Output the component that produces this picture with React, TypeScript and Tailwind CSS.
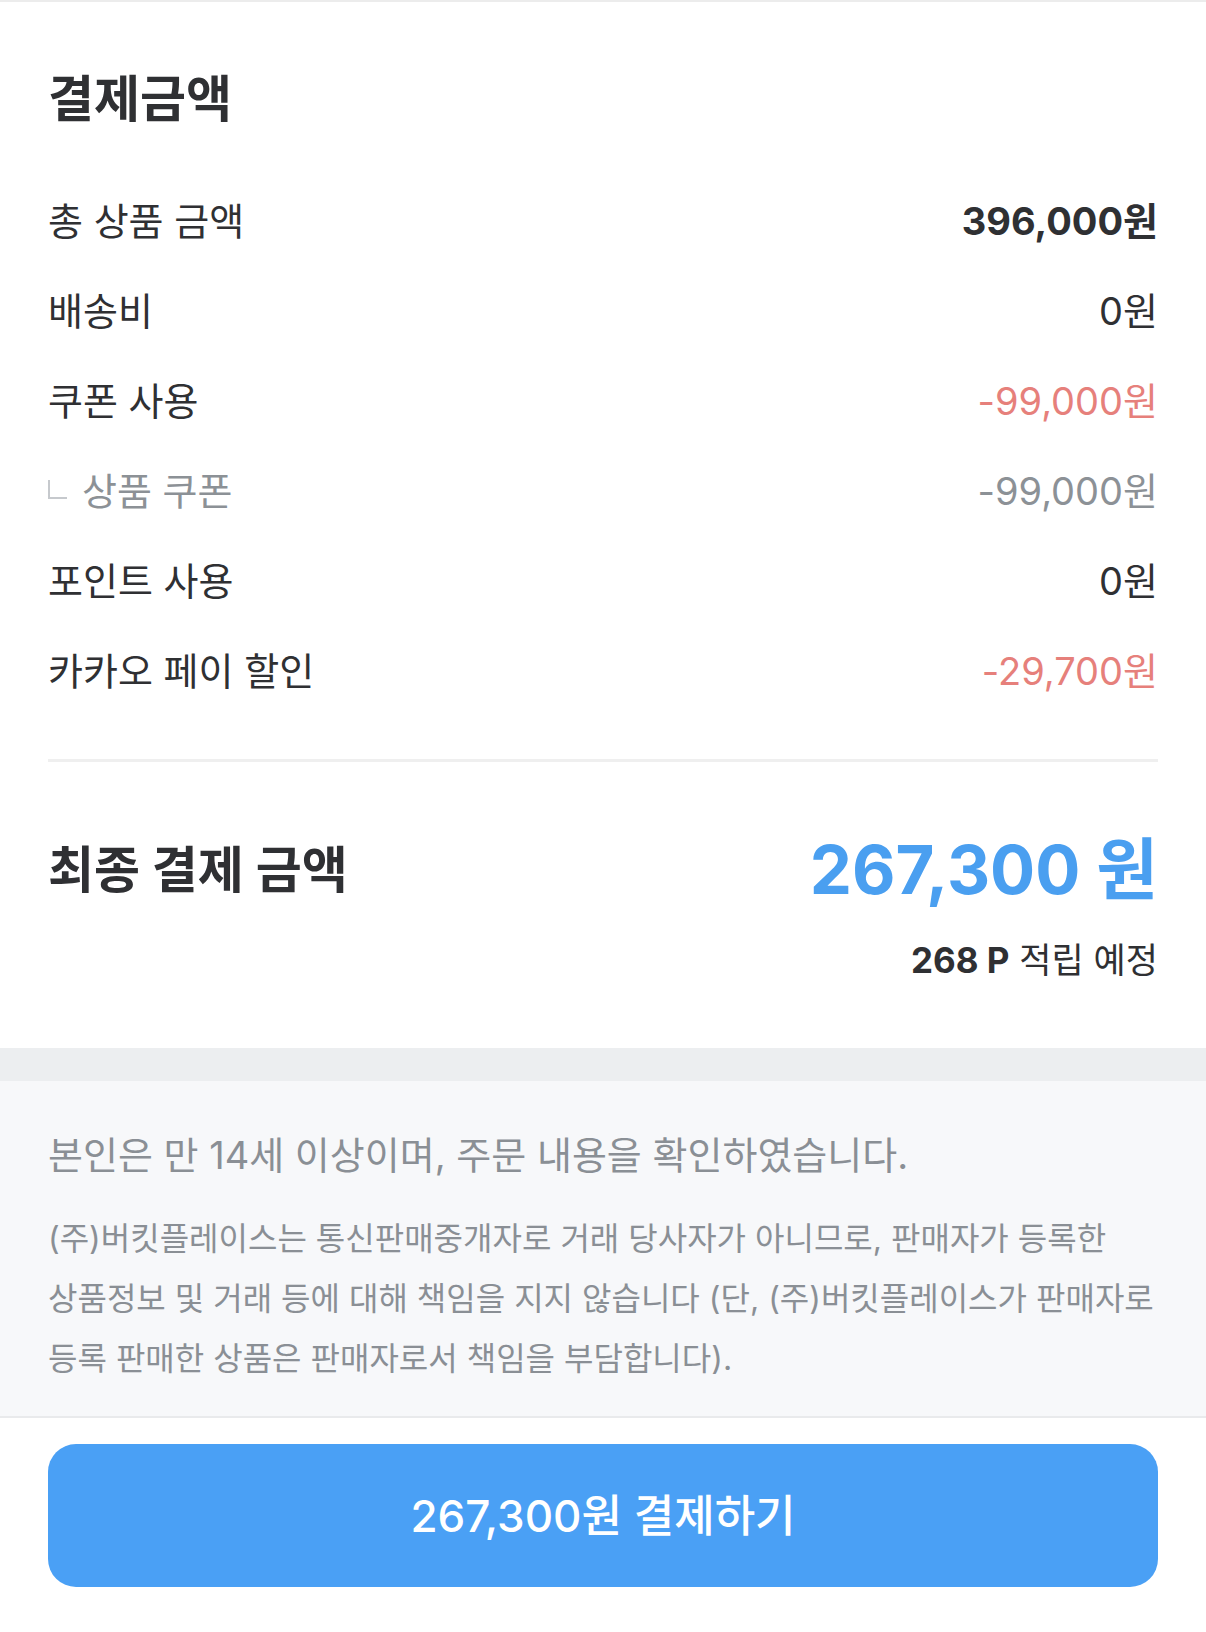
import React from 'react'

type Row = {
    label: string;
    value: string;
    tone?: 'bold' | 'red' | 'sub';
}

const rows: Row[] = [
    { label: '총 상품 금액', value: '396,000원', tone: 'bold' },
    { label: '배송비', value: '0원' },
    { label: '쿠폰 사용', value: '-99,000원', tone: 'red' },
    { label: '상품 쿠폰', value: '-99,000원', tone: 'sub' },
    { label: '포인트 사용', value: '0원' },
    { label: '카카오 페이 할인', value: '-29,700원', tone: 'red' },
]

const SummaryRow: React.FC<Row> = ({ label, value, tone }) => {
    const valueClass =
        tone === 'bold' ? 'font-bold text-[#2f3033]' :
        tone === 'red' ? 'text-[#e6807b]' :
        tone === 'sub' ? 'text-[#8c9196]' : 'text-[#2f3033]'

    return (
        <div className="h-[90px] flex flex-row items-center justify-between">
            {tone === 'sub' ? (
                <div className="flex flex-row items-center text-[38px] text-[#8c9196]">
                    <span className="w-[19px] h-[19px] border-l-2 border-b-2 border-[#c6c9cd] mr-[15px] -mt-[4px]" />
                    <span>{label}</span>
                </div>
            ) : (
                <div className="text-[38px] text-[#2f3033]">{label}</div>
            )}
            <div className={`text-[38px] ${valueClass}`}>{value}</div>
        </div>
    )
}

export default function App() {
    return (
        <div className="w-[1206px] min-h-[1632px] bg-white border-t-2 border-[#ececec] font-['Inter','Noto_Sans_CJK_KR',sans-serif]">
            <div className="px-12">
                <h2 className="pt-[68px] text-[50px] leading-[58px] font-bold text-[#2f3033]">결제금액</h2>

                <div className="mt-[48px]">
                    {rows.map((r) => (
                        <SummaryRow key={r.label + r.value} {...r} />
                    ))}
                </div>

                <div className="mt-[43px] h-[3px] bg-[#efefef]" />

                <div className="mt-[70px] flex flex-row items-center justify-between">
                    <div className="text-[50px] font-bold text-[#2f3033]">최종 결제 금액</div>
                    <div className="text-[67px] leading-[76px] font-bold text-[#4a9ff0]">267,300 원</div>
                </div>
                <div className="mt-[30px] pb-[66px] text-right text-[35px] leading-[44px] text-[#2f3033]">
                    <span className="font-bold">268 P</span> 적립 예정
                </div>
            </div>

            <div className="h-[33px] bg-[#eceef0]" />

            <div className="bg-[#f7f8fa] px-12 pt-[51px] pb-[27px] border-b-2 border-[#e9eaec] text-[#8a8f95]">
                <p className="text-[38px] leading-[46px]">본인은 만 14세 이상이며, 주문 내용을 확인하였습니다.</p>
                <p className="mt-[31px] text-[32px] leading-[60px]">
                    <span className="block whitespace-nowrap">(주)버킷플레이스는 통신판매중개자로 거래 당사자가 아니므로, 판매자가 등록한</span>
                    <span className="block whitespace-nowrap">상품정보 및 거래 등에 대해 책임을 지지 않습니다 (단, (주)버킷플레이스가 판매자로</span>
                    <span className="block whitespace-nowrap">등록 판매한 상품은 판매자로서 책임을 부담합니다).</span>
                </p>
            </div>

            <div className="px-12 pt-[26px] pb-[45px]">
                <button className="w-full h-[143px] rounded-[28px] bg-[#4aa0f5] text-white text-[44px] font-medium">
                    267,300원 결제하기
                </button>
            </div>
        </div>
    )
}
